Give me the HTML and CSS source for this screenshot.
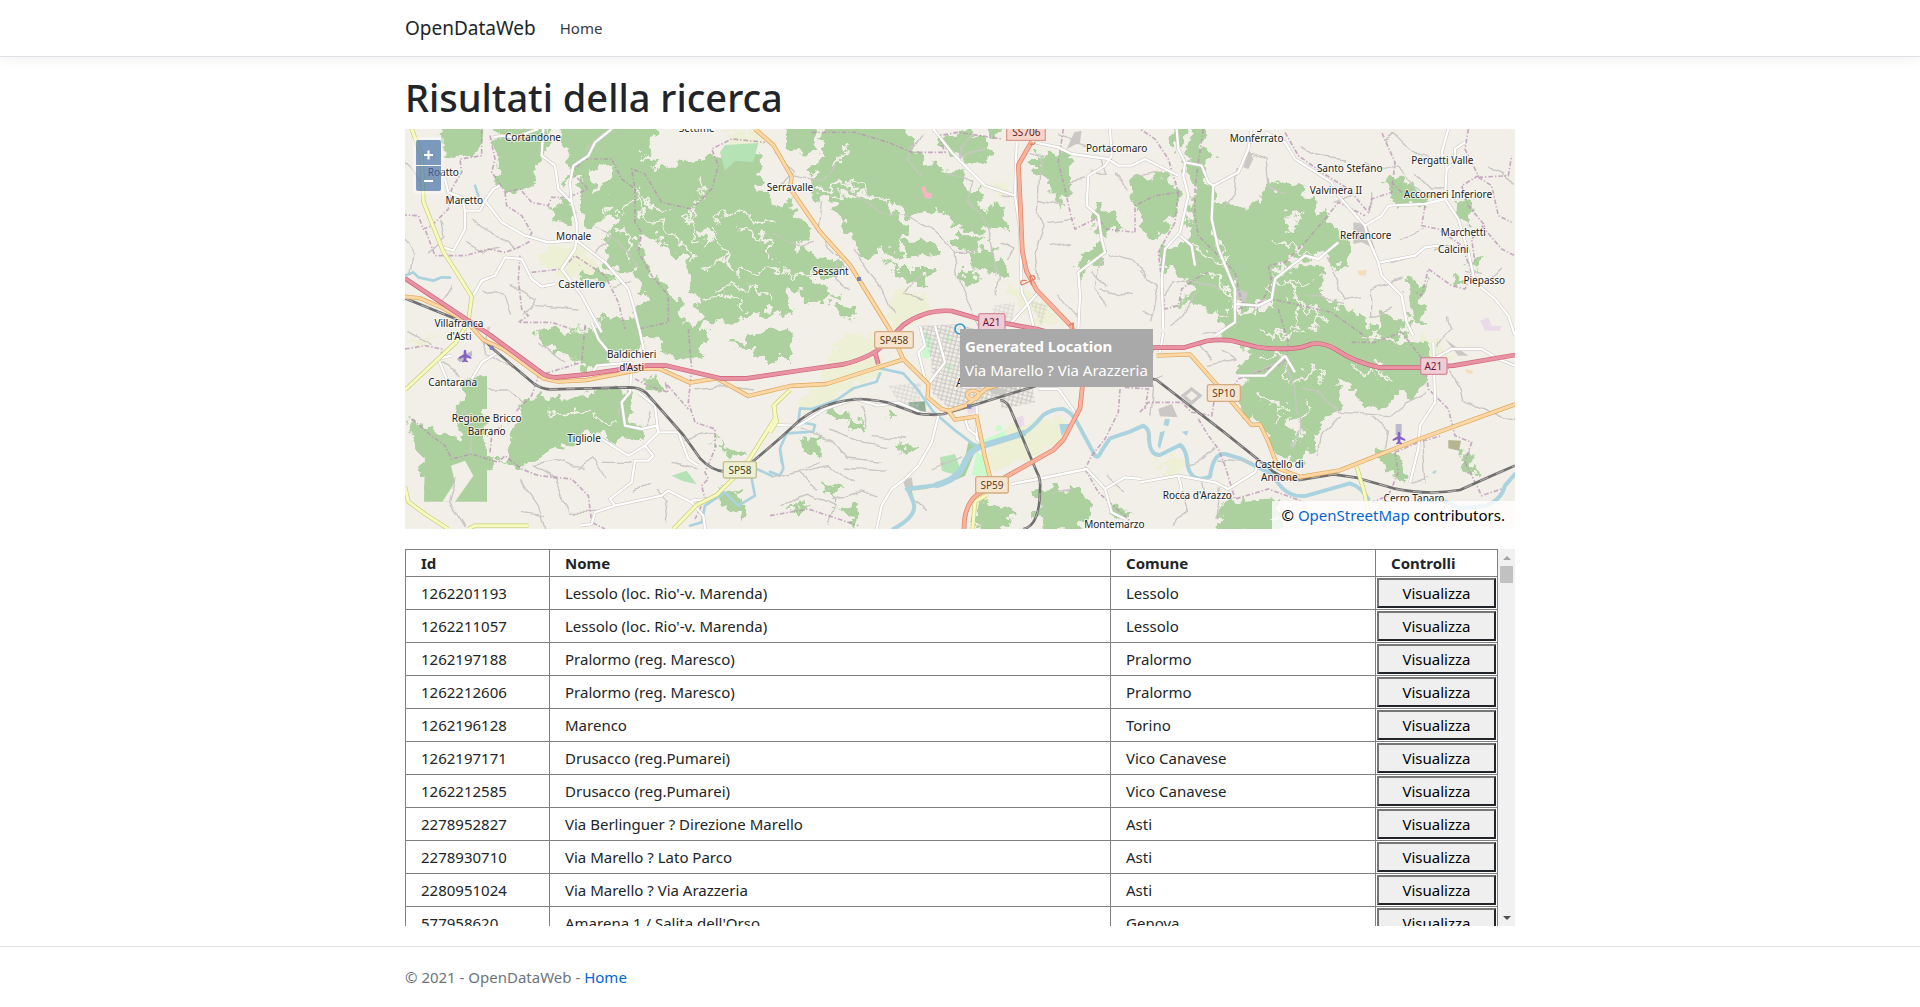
FILE: index.html
```html
<!DOCTYPE html>
<html lang="it">
<head>
<meta charset="utf-8">
<meta name="viewport" content="width=device-width, initial-scale=1">
<title>Risultati della ricerca - OpenDataWeb</title>
<link rel="stylesheet" href="styles.css">
</head>
<body>
<header class="site-header">
  <nav class="container navbar">
    <a class="brand" href="#">OpenDataWeb</a>
    <a class="nav-link" href="#">Home</a>
  </nav>
</header>
<main class="container">
  <h1 class="title">Risultati della ricerca</h1>
  <div class="map">
    <svg class="map-canvas" viewBox="0 0 3330 1200" preserveAspectRatio="xMidYMid slice" role="img" aria-label="Mappa di Asti">
      <defs>
        <filter id="rough" x="-5%" y="-5%" width="110%" height="110%">
          <feTurbulence type="fractalNoise" baseFrequency="0.028" numOctaves="4" seed="8" result="n"/>
          <feDisplacementMap in="SourceGraphic" in2="n" scale="70" xChannelSelector="R" yChannelSelector="G"/>
        </filter>
        <filter id="wavy" x="-5%" y="-5%" width="110%" height="110%">
          <feTurbulence type="fractalNoise" baseFrequency="0.015" numOctaves="2" seed="3" result="n"/>
          <feDisplacementMap in="SourceGraphic" in2="n" scale="30" xChannelSelector="R" yChannelSelector="G"/>
        </filter>
        <pattern id="streets" width="26" height="24" patternUnits="userSpaceOnUse" patternTransform="rotate(14)">
          <path d="M0 2H26M3 0V24M15 2V24M3 13H26" stroke="#c6c3bf" stroke-width="3" fill="none"/>
        </pattern>
        <path id="plane" d="M0-18c3 0 4 4 4 7v7l15 9v5L4 5v8l5 4v3l-9-2-9 2v-3l5-4V5l-15 5V5l15-9v-7c0-3 1-7 4-7z" fill="#8461c4"/>
        <g id="local">
          <path d="M265 25 290 20 330 25 400 0M415 0 410 80 450 110 460 180 500 220 515 280 515 330 510 360 470 420 530 500 590 610M620 0 570 40 550 80 505 110 495 160 500 220M515 335 600 400 670 480 685 530 705 610 720 680M500 335 430 340 360 320 290 280 240 215 265 180 285 170M240 215 225 245 180 245 180 300 145 365 115 355M180 245 170 205 130 190 120 150M205 500 230 455 270 440 300 385 350 390 380 450 410 473 450 465M560 580 580 630 620 680M140 680 100 690 125 750M280 670 230 700 200 750M555 745 575 710 680 700 675 790 650 820 660 890 710 900 755 890 760 910 720 950 670 980 590 930M700 790 750 830 760 910 820 910 850 990 880 1010M720 950 745 980 730 995 690 995 680 1060 615 1110 630 1130 770 1100 790 1085 860 1120 895 1160 900 1200M630 1130 570 1150 560 1185 525 1190M910 1110 860 1115"/>
          <path d="M1585 0 1640 70 1710 140 1740 170 1830 200M1835 40 1830 200 1845 300 1850 490 1870 530 1885 590M1890 40 1960 55 2000 75 2110 90 2140 110 2180 110 2220 90 2320 140M2115 0 2120 80 2100 110 2050 140 2045 230 2080 260 2090 330 2100 370 2020 430 2025 500 2020 600M1900 490 1820 580M2315 0 2320 60 2340 100 2390 110 2410 160 2425 170 2500 130 2530 60 2540 0M2340 100 2335 140 2350 200 2325 310 2280 360 2270 450 2275 600M2325 320 2360 350 2370 410M2410 160 2425 170 2420 270 2440 360 2490 480 2490 580 2430 620M2490 525 2560 530 2600 510 2610 450 2660 410 2700 380 2740 390 2800 340"/>
          <path d="M2580 10 2640 40 2670 90 2780 160 2800 200 2880 290 2890 330 2920 400 2930 440 2990 500 3005 580 3025 620M2880 290 2930 260 2950 230 3060 225 3120 210 3125 120 3110 70 3130 0M3125 120 3150 100 3150 60 3180 40M3120 210 3160 270 3190 370 3210 460 3270 510 3310 560 3330 620M2925 400 3030 380 3060 355 3100 350M3085 640 3090 820 3045 890 3040 960 3015 1060M3085 690 3140 660 3230 660 3280 690 3330 710M2205 1060 2320 1040 2430 1060 2470 1080 2550 1030 2560 1000M2320 1040 2330 1080 2300 1120M2275 610 2265 670M2640 680 2580 740 2500 740M2640 680 2670 730M1095 888 1180 890 1260 840 1350 810 1420 830 1480 820 1545 850 1600 860 1580 940 1540 1010 1500 1050 1460 1080 1430 1130 1415 1200M1545 590 1560 650 1540 670 1560 750M1590 590 1620 700 1570 765M1715 830 1715 930 1740 950M1680 870 1690 900 1715 920M1820 1065 1900 1050 2045 1020 2100 1080 2120 1150 2160 1170M2100 1080 2160 1045 2210 1050M1960 780 2010 850M1900 780 1960 780"/>
        </g>
        <path id="rail" d="M0 508 190 585 260 656 385 763Q410 780 435 781L675 775Q705 775 725 793L835 918 885 988Q920 1025 960 1028H1000L1045 996 1125 928 1185 873Q1260 815 1365 810 1410 812 1445 820L1535 853Q1570 860 1615 855L1715 826 1875 776 2100 710 2255 753 2455 908 2605 1028Q2640 1053 2685 1053L2785 1036 2855 1046 2965 1078Q3070 1100 3165 1083L3265 1038 3330 1010M1785 813Q1805 815 1815 838L1845 908 1895 1028Q1908 1050 1905 1080 1905 1190 1855 1200"/>
        <path id="secondary" d="M20 0 50 80 55 218 115 368 155 430 200 503 190 578 155 638 0 783M0 1073 10 1118 60 1155 130 1200M190 1200 210 1190H370M805 1200 875 1128 935 1098 985 1048 1035 988 1110 868 1108 828 1155 783M1105 828 1115 878 1095 910M2855 1013 2878 1090 2890 1148 2885 1200M1745 1098 1710 1118 1703 1200"/>
        <path id="primary" d="M0 503 45 508 115 538 185 578 235 633 295 660 415 748 460 758 545 753 725 718 765 720 855 761 935 748 1030 801 1155 771 1265 765 1395 723 1495 691M1050 0 1105 48 1160 143 1155 178 1245 308 1335 408 1455 603 1495 691 1570 765 1568 805 1610 840 1630 845 1650 872 1715 862 1740 985 1755 1045M1630 846 1685 828 1745 778 1815 758M2255 680 2355 676 2445 778 2540 888 2565 886 2590 938 2620 1018 2685 1044 2805 1024 3035 933 3330 826M1686 798A18 13 0 1 0 1722 798 18 13 0 1 0 1686 798"/>
        <path id="trunk" d="M1880 38 1840 108 1845 208 1852 368 1865 428 1895 483 2000 593 2030 680 2032 773 2025 838 1975 933 1945 963 1795 1048 1715 1098Q1677 1130 1677 1200"/>
        <path id="motorway" d="M0 448 255 618 405 728Q425 745 455 745L545 736 725 710H785L945 748H1025L1195 723 1315 706Q1400 685 1435 648L1495 588Q1560 540 1640 546L1715 568 1895 600 2100 655 2335 656 2405 636Q2440 630 2475 634L2555 654Q2620 664 2685 656L2720 645Q2755 638 2795 663 2850 700 2925 716H3045L3145 710 3330 678M1435 648 1410 670 1420 705"/>
      </defs>
      <rect width="3330" height="1200" fill="#f2efe9"/>

      <!-- farmland -->
      <g fill="#eef0d5" filter="url(#rough)">
        <path d="M960 0H1090L1070 40 990 60ZM430 350 520 340 600 440 590 470 480 440 400 400ZM1290 640 1420 600 1430 740 1310 790 1200 850 1180 810 1260 740ZM0 640 60 620 110 600 60 650ZM1470 480 1540 490 1600 560 1450 600ZM1790 460 1900 500 1960 570 1900 590ZM1820 890 1930 860 2000 900 1950 950 1760 1040 1740 980ZM2240 1000 2330 980 2350 1010 2300 1050ZM3060 620 3110 640 3150 700 3080 700ZM1770 140 1800 180 1780 200Z"/>
      </g>

      <!-- woods -->
      <g fill="#add19e" filter="url(#rough)">
        <path d="M110-30H220L225 50 195 90 150 85 110 55Z"/>
        <path d="M270-30H425L430 60 395 100 400 130 370 180 310 190 275 150 280 90Z"/>
        <path d="M450-30H770L730 50 710 80 780 120 850 90 940 80 1070 75 1060 180 1130 260 1170 330 1150 400 1160 550 1050 540 1000 580 900 580 860 500 840 400 790 350 730 320 690 300 740 430 830 520 840 620 700 625 700 560 720 490 690 430 640 430 610 420 600 330 640 260 600 250 550 300 520 240 530 140 480 160 500 90Z"/>
        <path d="M440 230 480 210 510 260 500 300 450 270ZM520 430 590 420 610 460 560 460Z"/>
        <path d="M1140-30H1240L1230 75 1150 60ZM1250-30H1480L1560 110 1670 130 1700 180 1740 200 1700 230 1600 240 1500 250 1430 200 1330 190 1230 210 1220 130 1260 70Z"/>
        <path d="M1590 30 1690 10 1770 60 1740 105 1680 90 1630 75ZM1740-20H1800L1790 20 1750 20Z"/>
        <path d="M1270 200 1440 210 1500 300 1480 380 1430 350 1400 400 1360 360 1320 300Z"/>
        <path d="M1480 215 1600 230 1590 260 1510 255ZM1610 215 1730 215 1760 290 1720 310 1670 300 1600 260ZM1750 230 1800 230 1810 310 1740 290Z"/>
        <path d="M1080 230 1150 220 1220 310 1210 350 1080 310ZM1060 330 1200 370 1310 400 1300 440 1210 440 1300 510 1220 525 1150 470 1120 520 1060 570Z"/>
        <path d="M1430 385 1480 420 1560 420 1590 420 1550 470 1480 440ZM1500 335 1600 335 1590 380 1500 375ZM1650 300 1700 330 1750 310 1720 365 1650 360ZM1670 370 1780 360 1800 440 1710 420ZM1670 440 1700 410 1730 460 1660 460ZM1290 535 1350 530 1350 570 1300 560Z"/>
        <path d="M1890 70 2000 75 1990 200 1955 245 1930 160 1890 130ZM2060 225 2130 260 2160 310 2080 320ZM2020 370 2100 345 2080 400 2030 440ZM2170 210 2240 170 2235 250Z"/>
        <path d="M2290-20H2340L2335 50 2310 60ZM2365-20H2410L2390 50 2430 90 2400 110 2430 200 2415 310 2480 430 2470 560 2400 530 2360 510 2300 550 2370 480 2330 450 2270 420 2280 350 2360 340 2350 280 2370 170 2340 130Z"/>
        <path d="M2180 150 2290 130 2330 200 2290 290 2250 330 2200 290Z"/>
        <path d="M2420 220 2560 235 2580 190 2620 160 2690 170 2730 220 2770 280 2800 320 2840 330 2835 420 2780 410 2760 370 2710 395 2670 380 2650 410 2600 420 2590 520 2520 540 2490 470 2460 380 2420 300Z"/>
        <path d="M2600 430 2760 400 2750 490 2790 530 2870 550 2910 610 2830 650 2760 620 2680 640 2640 600 2600 550Z"/>
        <path d="M2940 160 2990 135 3020 175 3070 200 3060 235 2970 230ZM3150 220 3200 210 3200 280 3160 280ZM3010 465 3060 460 3055 550 3070 590 3010 580ZM3205 380 3230 380 3225 430 3190 420ZM2920 560 3010 580 2990 630 2910 620ZM3145 440 3180 440 3180 465 3150 465Z"/>
        <path d="M2450 560 2620 540 2670 620 2780 590 2870 630 3070 640 3080 720 3040 800 2970 780 2950 840 2880 845 2850 780 2800 760 2800 840 2750 880 2730 940 2700 1000 2610 980 2580 900 2520 860 2490 790 2540 760 2490 720 2550 670 2460 620Z"/>
        <path d="M390 600 560 610 600 560 700 570 710 640 640 670 540 730 480 670 420 660ZM1030 630 1100 600 1150 590 1160 690 1080 690 980 640ZM740 590 900 570 890 700 800 700Z"/>
        <path d="M345 815 500 800 630 775 690 790 670 870 710 900 720 935 610 930 540 910 500 940 360 1010 330 1020 290 990 320 930Z"/>
        <path d="M170 760 235 750 240 970 290 990 240 1025 180 990 150 1000 60 1110 55 990 20 960 10 870 90 900 170 930Z"/>
        <path d="M1260 845 1330 840 1320 890ZM1320 880 1380 870 1370 920ZM1180 940 1250 920 1240 990ZM1280 1130 1360 1135 1350 1180ZM1250 1060 1320 1080 1290 1110ZM1470 935 1550 955 1490 970ZM940 1085 1020 1110 1020 1160 970 1140ZM920 930 1020 980 990 995ZM1890 1090 2010 1070 2060 1130 2020 1210H1910ZM1730 1110 1840 1150 1790 1210H1700ZM2455 1120 2620 1110 2610 1220H2430ZM2920 960 2990 990 3000 1050 2940 1020ZM1430 840 1480 850 1450 880ZM1140 1140 1200 1130 1190 1160ZM2120 1120 2160 1140 2180 1170 2130 1160Z"/>
        <path d="M715 745 755 745 765 785 715 775ZM3180 960 3200 990 3220 1040 3170 1020Z"/>
      </g>
      <!-- woodland cut at the tile edge -->
      <path d="M60 960H246V1118H57ZM180 750 246 740V840H190Z" fill="#add19e"/>
      <path d="M112 1118 150 1060 138 1010 180 995 205 1040 150 1118Z" fill="#f2efe9"/>

      <!-- clearings -->
      <g fill="none" stroke="#f2efe9" stroke-width="7" filter="url(#rough)">
        <path d="M560 130 610 120 600 170 560 190M640 250 700 210 720 260 800 310 860 400M880 330 850 260 880 210M740 120 800 80 860 90M920 270 1000 240 1060 280 1130 270M900 420 960 390 1000 430 1110 420M930 480 1040 470 1100 510M930 300 950 360 990 420M1000 300 1070 320 1100 390M640 300 680 330 660 400M790 440 830 420 870 520M880 520 960 500 1020 540M720 380 780 410 800 480M690 180 740 230 780 250M880 140 900 200M1330 60 1280 110M1240 180 1330 160 1420 210M1120 420 1180 440 1240 430"/>
        <path d="M2640 260 2680 250 2660 290M2620 330 2760 400M2600 460 2720 460M2650 500 2750 560 2720 600M2640 440 2680 530 2670 600M2580 680 2650 690 2640 760M2660 770 2720 720 2760 760M2560 800 2640 830 2610 880M2700 820 2690 900 2650 960M2850 720 2920 740M2900 690 2960 760M2370 350 2430 400 2480 390M2380 440 2440 450 2470 500M2570 600 2620 620 2690 610M430 860 560 840M560 860 620 880M70 890 160 870"/>
      </g>
      <g fill="#f2efe9" filter="url(#rough)">
        <path d="M2640 270 2670 255 2680 285 2650 310ZM740 30 820 30 860 60 790 80ZM560 130 610 110 620 150 580 190ZM890 300 930 320 900 360ZM2640 860 2690 870 2690 930 2650 900Z"/>
      </g>
      <path d="M960 48 1060 42 1045 100 990 95 960 125 945 70Z" fill="#b5e3b5"/>
      <path d="M1605 985 1650 975 1675 1045 1610 1025ZM800 1040 845 1025 875 1066 830 1055Z" fill="#b5e3b5"/>
      <path d="M1510 820 1560 817 1563 852 1515 845Z" fill="#8fae95"/>
      <path d="M1500 1070Q1600 1080 1670 1035L1690 940 1720 945 1680 1040Q1600 1080 1520 1085L1530 1120Z" fill="#a5d19a"/>
      <path d="M1715 970 1735 980 1750 1040 1700 1040ZM1585 640 1570 690 1550 685 1560 600ZM1625 610 1640 630 1625 645ZM1620 710 1645 705 1635 735Z" fill="#c8facc"/>
      <path d="M1710 950 1800 930 1800 905 1730 935ZM1775 890 1790 888 1792 905 1770 905Z" fill="#c8facc"/>

      <!-- built-up areas -->
      <path d="M1550 590 1660 585 1870 650 1850 780 1780 810 1690 830 1640 845 1580 790 1580 700Z" fill="url(#streets)"/>
      <path d="M1780 770 1880 760 1890 820 1790 840Z" fill="url(#streets)"/>
      <path d="M1450 770 1550 760 1540 840 1480 820ZM1760 530 1830 520 1820 590 1770 585ZM1870 510 1930 530 1910 590Z" fill="url(#streets)" opacity=".6"/>
      <g fill="#cac8c5">
        <path d="M1750 775 1800 780 1800 800 1760 795ZM2845 280 2885 285 2910 360 2870 340 2845 345ZM2530 60 2545 90 2530 120 2515 115ZM2008 10 2030 5 2025 40 1985 60ZM2260 840 2300 825 2318 865 2265 862ZM1495 1055 1520 1045 1525 1075 1500 1075ZM2500 480 2530 490 2520 520 2490 510ZM3120 630 3190 680 3160 680Z"/>
        <path d="m2360 780 25 20-25 22-25-22z" fill="none" stroke="#cac8c5" stroke-width="10"/>
      </g>
      <g fill="#ebdbe8"><path d="M1685 830 1710 825 1715 850 1690 855ZM1835 865 1855 860 1858 890 1840 895ZM3225 575 3250 565 3260 590 3290 590 3285 605 3240 605Z"/></g>
      <path d="M1550 178 1560 170 1565 190 1582 195 1580 208 1560 208Z" fill="#fcb4c4"/>
      <path d="M2858 425 2885 422 2882 440 2862 438ZM3180 720 3205 725 3200 735 3185 732Z" fill="#f5dcba"/>
      <path d="M3130 933 3168 935 3162 965 3130 958Z" fill="#b6b592"/>

      <!-- water -->
      <g fill="none" stroke="#aad3df" stroke-linejoin="round" stroke-linecap="round">
        <path stroke-width="8" d="M0 440 25 430 40 445 85 455 110 445 135 446M210 170 220 200M1425 718 1495 733 1535 778 1585 848 1655 908 1715 953M1425 733 1415 758 1345 778 1295 813 1220 840 1185 838 1180 878 1230 888 1225 908 1145 913 1125 958 1135 1018 1125 1040 1095 1028M1055 1020 1100 1040M855 1190 890 1180 900 1130 960 1090 1000 1130 1050 1100 1040 1050M1125 960 1130 1000"/>
        <path stroke-width="12" d="M1465 1200Q1540 1160 1525 1120T1505 1080L1595 1068Q1660 1050 1675 1010T1720 955L1855 913Q1880 900 1915 858 1945 838 1975 840 2000 850 2015 878L2070 980Q2080 990 2090 965L2115 928 2175 908 2215 890Q2235 900 2232 930 2235 980 2265 978L2325 948Q2345 960 2348 1010 2360 1065 2415 1043 2425 970 2460 975L2505 988 2605 1038Q2640 1110 2705 1100L2835 1063Q2870 1075 2890 1110M3105 1110 3165 1138 3245 1130Q3290 1110 3300 1070L3330 1035"/>
        <path stroke-width="19" d="M1595 1068Q1660 1050 1675 1010T1720 955L1855 913"/>
      </g>
      <path d="M1963 885 1995 885 1970 922ZM2280 870 2295 870 2290 892 2275 888ZM2265 910 2280 905 2265 960 2258 950ZM2330 908 2350 905 2345 920ZM3080 1030 3095 1022 3090 1035Z" fill="#aad3df"/>

      <!-- lanes -->
      <g fill="none" stroke="#c9c6c3" stroke-width="4" filter="url(#wavy)">
        <path d="M0 100 40 140 50 200M110 270 120 320 70 370M200 270 260 300 330 360M0 330 30 380 20 430M180 340 230 370 280 360M230 480 300 500 320 560M320 470 400 510 360 560M390 530 520 540M140 470 110 520M560 300 640 330 700 420M620 320 570 380M620 480 690 450M400 640 480 700M540 60 600 20M10 610 80 650M250 590 240 680 330 720M100 700 170 740M240 780 310 780 350 820M180 840 200 920 190 980M150 1050 130 1120 180 1200M345 1050 400 1130 420 1200M345 1150 420 1160M380 1010 480 990 540 1020M520 1020 560 990 600 1050M590 1000 680 1000M380 1010 450 1050 490 1150 580 1150M650 820 640 860M740 850 720 900M750 1080 790 1120 780 1180M690 1090 740 1060M800 1000 880 1020M870 780 960 770 1050 780M840 930 930 910"/>
        <path d="M1110 70 1170 130 1130 170M1170 140 1250 160 1300 110M1250 210 1240 300 1270 350 1300 380M1330 180 1420 250 1500 260 1600 310 1650 370 1660 440 1720 590M1100 310 1180 350 1230 340M1300 390 1290 450 1330 480M1350 360 1390 420 1440 480 1470 560M1550 420 1500 490 1560 520M1560 20 1500 80 1560 150M1620 130 1700 160 1690 210 1730 250 1760 350 1780 450 1770 500M1700 10 1660 80 1740 60M1650 370 1720 370M1790 200 1830 210M1790 340 1830 360 1810 390M1870 70 1910 80 1900 240 1920 290 1890 370 1900 450M1900 210 1980 230M1930 280 2010 270M1930 350 2000 340M1960 20 2040 50M2040 150 1990 160M2130 130 2170 180M2060 130 2100 130 2080 80M2180 150 2250 130M2110 370 2180 390 2230 440M2060 420 2110 470M2090 480 2180 500M2010 560 1960 500M2090 390 2070 480 2110 530"/>
        <path d="M2210 430 2260 470 2240 580M2210 540 2250 560M2270 520 2300 450 2380 460 2440 480M2380 480 2330 560 2290 590M2500 110 2490 200 2460 240M2530 70 2580 90 2590 180 2640 190M2690 50 2740 80 2820 90M2880 100 2980 120 3050 190M2940 40 2970 10 3020 60 3090 90M3030 130 3080 180 3130 180M2780 220 2840 200M2900 190 2900 250M2760 390 2790 450 2820 510 2870 500M2700 500 2820 520M2900 480 2900 560 2960 540M2900 480 2990 450M2990 330 3050 300M3090 360 3160 340M2960 400 3040 380M3130 560 3140 600 3100 650M3180 430 3230 440M3290 420 3260 450M3250 110 3320 160M2380 640 2420 690M2390 620 2450 610M2450 660 2490 690 2410 710M2350 1010 2400 990 2430 950M2530 740 2620 700M2620 680 2650 720 2670 800 2690 880 2660 960M2690 780 2740 790 2810 850 2950 860 3000 820 3060 790M2810 860 2750 910 2740 980M2900 860 2950 910 2940 960M3130 720 3170 780 3180 810 3250 850 3330 870M3050 930 3060 1060M3020 1060 3070 1040"/>
        <path d="M1100 1050 1180 1030 1240 1080M1180 1030 1270 1010 1350 1060M1190 900 1280 940 1320 990 1440 1000M1270 900 1380 940 1450 950M1400 920 1500 930M1320 1020 1450 1030M1120 1130 1210 1090 1290 1130 1270 1190M1280 1110 1370 1080 1420 1100M1370 830 1390 900M1250 1000 1200 1020M1530 1110 1560 1150M1580 1020 1670 980M1830 690 1950 700M2250 650 2220 760 2280 740M2250 770 2240 860M2330 1080 2350 1140 2310 1190M2390 1060 2400 1120M2440 1070 2430 1170M1940 1100 2000 1080M2100 1040 2160 1090M2540 1000 2440 990"/>
      </g>

      <!-- municipal boundaries -->
      <g fill="none" stroke="#b893b4" stroke-width="5" stroke-dasharray="14 6 4 6" opacity=".75">
        <path d="M230 0 230 80 165 90 170 130 140 180 130 240 80 290 55 300 40 260 0 258M255 20 270 90 260 130 285 165 300 190 345 180 380 220 430 230 440 205 490 205 550 180 500 130 540 90 620 90 650 150 690 180 680 120 720 135 770 220 860 240 920 180 940 110 920 60 980 30 1080 40M300 190 305 230 350 260 380 310 370 340 330 360 300 370 250 360 180 380 90 380 60 300M345 380 340 450 350 540 370 560 340 580 440 580 500 600M380 430 470 420 510 380 600 440 640 520 660 600M690 180 690 280 710 310 700 370 740 440 790 500 790 580 700 600M0 660 60 650 110 660 110 690"/>
        <path d="M20 870 80 920 120 950 140 990 200 975 280 1000 300 980 350 1020 400 1040 500 1050 550 1100 560 1180 600 1200M540 590 530 700 400 740 380 800 330 850M255 970 260 920 290 890M850 600 860 720 850 820 870 880 930 900 930 960 900 1030 910 1050 890 1070 900 1110 870 1170M690 750 730 770 790 790 780 760 850 840M1220 10 1350 10 1450 40 1520 70 1620 70 1600 20 1660 10 1790 30"/>
        <path d="M1975 0 1960 100 1980 180 2000 270 2010 300 2070 270 2090 280 2100 300 2190 310 2190 230 2250 200 2320 190 2290 90 2250 30 2205 0M2320 190 2310 280 2260 370 2275 500 2280 540 2320 530 2330 480 2370 450 2410 430M2395 0 2380 100 2370 180 2370 260 2380 320 2430 370 2490 430 2510 520 2560 540 2600 460 2590 410 2640 400 2700 340 2760 270 2800 220 2880 260M2640 10 2680 80 2750 130 2830 180 2890 250 2900 210 2960 190 2970 100 2930 10M2990 190 2960 160M3060 230 3050 290 3100 300 3170 350 3200 430 3180 480 3140 470 3070 420 3050 500 3030 490M3190 0 3180 60 3220 140 3170 170 3190 230 3240 290 3200 330 3210 400M3220 145 3310 140 3320 80M3220 145 3260 170 3280 260 3320 280M3230 290 3290 360 3330 380M2500 540 2600 510 2780 550 2850 600 2890 630M2620 540 2650 640 2640 700 2500 750 2480 780M2205 850 2230 820 2330 820 2360 850 2420 860 2430 800M2380 870 2410 920 2440 960 2460 1010 2490 1110 2590 1080 2700 1120M2840 640 2910 640 2990 610 3060 700 3070 780 3130 840 3150 920 3200 940 3180 1000M2970 970 3040 940 3110 920M2970 970 2980 1030 2950 1100 2900 1120M3180 1000 3230 1100 3290 1080M1095 1160 1210 1140 1300 1170 1360 1190M2145 780 2140 850 2100 930 2060 980 2040 1020 2080 1090 2180 1180M2160 775 2230 780 2220 840"/>
      </g>

      <g class="roads">
        <use href="#local" stroke="#c8c4be" stroke-width="10"/>
        <use href="#local" stroke="#fff" stroke-width="7"/>
        <use href="#rail" stroke="#6f6f6f" stroke-width="8"/>
        <use href="#rail" stroke="#dcdad6" stroke-width="2" stroke-dasharray="26 26"/>
        <use href="#secondary" stroke="#c9cc78" stroke-width="13"/>
        <use href="#secondary" stroke="#f7fabf" stroke-width="9"/>
        <use href="#primary" stroke="#dda657" stroke-width="13"/>
        <use href="#primary" stroke="#fcd6a4" stroke-width="9"/>
        <use href="#trunk" stroke="#e07f63" stroke-width="14"/>
        <use href="#trunk" stroke="#f9b29c" stroke-width="10"/>
        <path stroke="#e07f63" stroke-width="4" d="M1865 455Q1840 450 1850 468L1890 450Q1890 435 1875 442L1880 468M1990 590 2005 582 2003 600M1875 45Q1890 50 1890 38"/>
        <use href="#motorway" stroke="#d0617c" stroke-width="14"/>
        <use href="#motorway" stroke="#e892a2" stroke-width="10"/>
      </g>

      <g fill="#7981b0"><path d="M254 650h12v12h-12zM1356 444h12v12h-12zM1686 826h13v13h-13z"/></g>
      <path d="M155 690 200 665 202 680 165 700ZM2972 885h18v34h-18z" fill="#bbbbcc"/>
      <use href="#plane" x="180" y="680"/>
      <use href="#plane" x="2982" y="926"/>

      <!-- road shields -->
      <g stroke-width="4">
        <path d="M1805-20h116v54h-116z" fill="#f7d5cb" stroke="#d89f90"/>
        <rect x="1409" y="608" width="116" height="49" rx="6" fill="#f7e4cf" stroke="#d3ad80"/>
        <rect x="1721" y="554" width="79" height="51" rx="6" fill="#f0ccd4" stroke="#d48a9d"/>
        <rect x="955" y="998" width="99" height="49" rx="6" fill="#eff0d2" stroke="#bdc093"/>
        <rect x="1712" y="1043" width="98" height="49" rx="6" fill="#f7e4cf" stroke="#d3ad80"/>
        <rect x="2407" y="767" width="99" height="50" rx="6" fill="#f7e4cf" stroke="#d3ad80"/>
        <rect x="3047" y="686" width="79" height="50" rx="6" fill="#f0ccd4" stroke="#d48a9d"/>
      </g>
      <g class="shield-text">
        <text x="1864" y="22" fill="#66211a">SS706</text>
        <text x="1467" y="644" fill="#5e4120">SP458</text>
        <text x="1760" y="590" fill="#6d1435">A21</text>
        <text x="1005" y="1034" fill="#42451c">SP58</text>
        <text x="1761" y="1079" fill="#5e4120">SP59</text>
        <text x="2456" y="804" fill="#5e4120">SP10</text>
        <text x="3085" y="723" fill="#6d1435">A21</text>
      </g>

      <g class="place-text">
        <text x="384" y="37">Cortandone</text>
        <text x="875" y="8">Settime</text>
        <text x="115" y="141">Roatto</text>
        <text x="178" y="226">Maretto</text>
        <text x="1155" y="185">Serravalle</text>
        <text x="506" y="333">Monale</text>
        <text x="530" y="478">Castellero</text>
        <text x="162" y="594">Villafranca</text>
        <text x="162" y="633">d'Asti</text>
        <text x="143" y="772">Cantarana</text>
        <text x="680" y="686">Baldichieri</text>
        <text x="680" y="725">d'Asti</text>
        <text x="245" y="879">Regione Bricco</text>
        <text x="245" y="917">Barrano</text>
        <text x="537" y="940">Tigliole</text>
        <text x="1277" y="437">Sessant</text>
        <text x="2135" y="69">Portacomaro</text>
        <text x="2555" y="0">Castagnole</text>
        <text x="2555" y="38">Monferrato</text>
        <text x="2834" y="130">Santo Stefano</text>
        <text x="2793" y="196">Valvinera II</text>
        <text x="3112" y="106">Pergatti Valle</text>
        <text x="3129" y="207">Accorneri Inferiore</text>
        <text x="2882" y="330">Refrancore</text>
        <text x="3175" y="322">Marchetti</text>
        <text x="3145" y="372">Calcini</text>
        <text x="3238" y="466">Piepasso</text>
        <text x="2623" y="1018">Castello di</text>
        <text x="2623" y="1056">Annone</text>
        <text x="2377" y="1109">Rocca d'Arazzo</text>
        <text x="3027" y="1119">Cerro Tanaro</text>
        <text x="2128" y="1196">Montemarzo</text>
        <text x="1684" y="774" class="city">Asti</text>
      </g>
      <circle cx="1665" cy="600" r="15" fill="#fff" fill-opacity=".4" stroke="#39c" stroke-width="5"/>
    </svg>
    <div class="zoom-control">
      <button type="button" aria-label="Zoom in"><svg viewBox="0 0 25 25"><path d="M8 15h9M12.500 10.500v9"/></svg></button>
      <button type="button" aria-label="Zoom out"><svg viewBox="0 0 25 25"><path d="M8 15h9"/></svg></button>
    </div>
    <div class="popup"><strong>Generated Location</strong><br>Via Marello ? Via Arazzeria</div>
    <div class="attribution">© <a href="#">OpenStreetMap</a> contributors.</div>
  </div>

  <div class="results">
    <div class="results-body">
      <table class="results-table">
        <colgroup><col class="col-id"><col class="col-name"><col class="col-town"><col class="col-actions"></colgroup>
        <thead><tr><th scope="col">Id</th><th scope="col">Nome</th><th scope="col">Comune</th><th scope="col">Controlli</th></tr></thead>
        <tbody>
          <tr><td>1262201193</td><td>Lessolo (loc. Rio'-v. Marenda)</td><td>Lessolo</td><td class="actions"><button type="button">Visualizza</button></td></tr>
          <tr><td>1262211057</td><td>Lessolo (loc. Rio'-v. Marenda)</td><td>Lessolo</td><td class="actions"><button type="button">Visualizza</button></td></tr>
          <tr><td>1262197188</td><td>Pralormo (reg. Maresco)</td><td>Pralormo</td><td class="actions"><button type="button">Visualizza</button></td></tr>
          <tr><td>1262212606</td><td>Pralormo (reg. Maresco)</td><td>Pralormo</td><td class="actions"><button type="button">Visualizza</button></td></tr>
          <tr><td>1262196128</td><td>Marenco</td><td>Torino</td><td class="actions"><button type="button">Visualizza</button></td></tr>
          <tr><td>1262197171</td><td>Drusacco (reg.Pumarei)</td><td>Vico Canavese</td><td class="actions"><button type="button">Visualizza</button></td></tr>
          <tr><td>1262212585</td><td>Drusacco (reg.Pumarei)</td><td>Vico Canavese</td><td class="actions"><button type="button">Visualizza</button></td></tr>
          <tr><td>2278952827</td><td>Via Berlinguer ? Direzione Marello</td><td>Asti</td><td class="actions"><button type="button">Visualizza</button></td></tr>
          <tr><td>2278930710</td><td>Via Marello ? Lato Parco</td><td>Asti</td><td class="actions"><button type="button">Visualizza</button></td></tr>
          <tr><td>2280951024</td><td>Via Marello ? Via Arazzeria</td><td>Asti</td><td class="actions"><button type="button">Visualizza</button></td></tr>
          <tr><td>577958620</td><td>Amarena 1 / Salita dell'Orso</td><td>Genova</td><td class="actions"><button type="button">Visualizza</button></td></tr>
        </tbody>
      </table>
    </div>
    <div class="scrollbar" aria-hidden="true">
      <span class="arrow arrow-up"></span>
      <span class="thumb"></span>
      <span class="arrow arrow-down"></span>
    </div>
  </div>
</main>
<footer class="site-footer">
  <div class="container">© 2021 - OpenDataWeb - <a href="#">Home</a></div>
</footer>
</body>
</html>
```
FILE: styles.css
```css
* { box-sizing: border-box; }

body {
  margin: 0;
  background: #fff;
  color: #212529;
  font: 15px/24px "Noto Sans", "Open Sans", sans-serif;
}

a { color: #0366d6; text-decoration: none; }

.container {
  width: 100%;
  max-width: 1140px;
  margin: 0 auto;
  padding: 0 15px;
}

.site-header {
  border-bottom: 1px solid #dee2e6;
  box-shadow: 0 4px 12px rgba(0, 0, 0, .05);
  margin-bottom: 16px;
}

.navbar {
  display: flex;
  align-items: center;
  gap: 24px;
  padding-top: 8px;
  padding-bottom: 8px;
}

.brand { color: #212529; font-size: 19px; line-height: 40px; }
.nav-link { color: #343a40; line-height: 40px; }

.title {
  margin: 0 0 8px;
  font-size: 38px;
  font-weight: 500;
  line-height: 48px;
}

.map {
  position: relative;
  height: 400px;
  overflow: hidden;
  margin-bottom: 20px;
}

.map-canvas { display: block; width: 100%; height: 100%; }

.roads { fill: none; stroke-linejoin: round; }

.shield-text, .place-text {
  font-family: "Noto Sans", sans-serif;
  font-size: 30px;
  text-anchor: middle;
}
.place-text {
  fill: #222;
  stroke: rgba(255, 255, 255, .7);
  stroke-width: 6px;
  stroke-linejoin: round;
  paint-order: stroke;
}
.place-text .city { font-size: 36px; }

.zoom-control {
  position: absolute;
  top: 8px;
  left: 8px;
  display: grid;
  gap: 1px;
  padding: 3px;
  border-radius: 4px;
  background: rgba(255, 255, 255, .4);
}
.zoom-control button {
  display: block;
  width: 25px;
  height: 25px;
  padding: 0;
  border: 0;
  background: rgba(0, 60, 136, .5);
}
.zoom-control button:first-child { border-radius: 2px 2px 0 0; }
.zoom-control button:last-child { border-radius: 0 0 2px 2px; }
.zoom-control svg { display: block; fill: none; stroke: #fff; stroke-width: 2; }

.popup {
  position: absolute;
  top: 50%;
  left: 50%;
  padding: 5px;
  background: #a9a9a9;
  color: #fff;
  white-space: nowrap;
}

.attribution {
  position: absolute;
  right: 0;
  bottom: 0;
  padding: 2px 10px;
  background: rgba(255, 255, 255, .8);
  color: #000;
}

.results { display: flex; height: 377px; }

.results-body {
  flex: 1;
  overflow-y: auto;
  scrollbar-width: none;
}

.results-table {
  width: 100%;
  table-layout: fixed;
  border-collapse: collapse;
}
.col-id { width: 144px; }
.col-town { width: 265px; }
.col-actions { width: 122px; }

.results-table th, .results-table td {
  border: 1px solid gray;
  padding: 1px 15px;
  text-align: left;
}
.results-table .actions { padding: 1px; }
.actions button {
  display: block;
  width: 100%;
  height: 30px;
  padding: 0;
  border: 2px solid;
  border-color: #767676 #212529 #212529 #767676;
  background: #efefef;
  color: #000;
  font: inherit;
}

.scrollbar {
  display: flex;
  flex-direction: column;
  align-items: center;
  width: 17px;
  background: #f1f1f1;
}
.arrow { display: grid; place-items: center; width: 17px; height: 17px; }
.arrow::before { content: ""; border: 4px solid transparent; }
.arrow-up::before { border-top: 0; border-bottom-color: #a3a3a3; }
.arrow-down { margin-top: auto; }
.arrow-down::before { border-bottom: 0; border-top-color: #505050; }
.thumb { width: 13px; height: 17px; background: #c1c1c1; }

.site-footer {
  margin-top: 20px;
  border-top: 1px solid #dee2e6;
  color: #6c757d;
  line-height: 60px;
}
```
